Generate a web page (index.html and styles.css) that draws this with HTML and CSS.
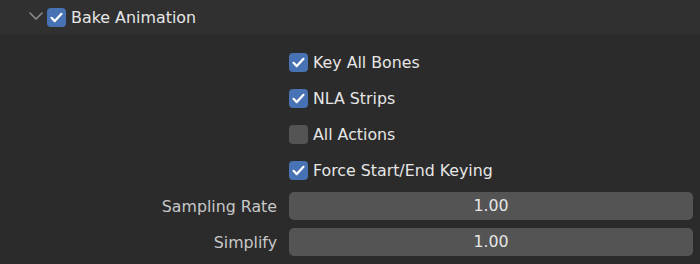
FILE: index.html
```html
<!DOCTYPE html>
<html lang="en">
<head>
    <meta charset="UTF-8">
    <title>Bake Animation</title>
    <link rel="stylesheet" href="styles.css">
</head>
<body>
    <div class="panel">
        <div class="panel-header">
            <svg class="chevron" width="14" height="8" viewBox="0 0 14 8">
                <path d="M1 1l6 6 6-6" fill="none" stroke="#8a8a8a" stroke-width="1.6" stroke-linecap="round" stroke-linejoin="round"/>
            </svg>
            <span class="check on">
                <svg width="19" height="19" viewBox="0 0 19 19"><path d="M4.5 9.8l3.3 3.3 6.7-7.3" fill="none" stroke="white" stroke-width="2.2" stroke-linecap="round" stroke-linejoin="round"/></svg>
            </span>
            <span class="header-title">Bake Animation</span>
        </div>
        <div class="panel-body">
            <div class="row">
                <div class="label"></div>
                <div class="control">
                    <span class="check on"><svg width="19" height="19" viewBox="0 0 19 19"><path d="M4.5 9.8l3.3 3.3 6.7-7.3" fill="none" stroke="white" stroke-width="2.2" stroke-linecap="round" stroke-linejoin="round"/></svg></span>
                    <span class="check-text">Key All Bones</span>
                </div>
            </div>
            <div class="row">
                <div class="label"></div>
                <div class="control">
                    <span class="check on"><svg width="19" height="19" viewBox="0 0 19 19"><path d="M4.5 9.8l3.3 3.3 6.7-7.3" fill="none" stroke="white" stroke-width="2.2" stroke-linecap="round" stroke-linejoin="round"/></svg></span>
                    <span class="check-text">NLA Strips</span>
                </div>
            </div>
            <div class="row">
                <div class="label"></div>
                <div class="control">
                    <span class="check"></span>
                    <span class="check-text">All Actions</span>
                </div>
            </div>
            <div class="row">
                <div class="label"></div>
                <div class="control">
                    <span class="check on"><svg width="19" height="19" viewBox="0 0 19 19"><path d="M4.5 9.8l3.3 3.3 6.7-7.3" fill="none" stroke="white" stroke-width="2.2" stroke-linecap="round" stroke-linejoin="round"/></svg></span>
                    <span class="check-text">Force Start/End Keying</span>
                </div>
            </div>
            <div class="row">
                <div class="label">Sampling Rate</div>
                <div class="control">
                    <div class="field">1.00</div>
                </div>
            </div>
            <div class="row">
                <div class="label">Simplify</div>
                <div class="control">
                    <div class="field">1.00</div>
                </div>
            </div>
        </div>
    </div>
</body>
</html>
```

FILE: styles.css
```css
body {
    margin: 0;
    background-color: #2b2b2b;
    font-family: 'DejaVu Sans', sans-serif;
    font-size: 15.8px;
    color: #e6e6e6;
}
.panel {
    width: 700px;
    height: 264px;
    overflow: hidden;
}
.panel-header {
    height: 35px;
    background-color: #303030;
    display: flex;
    align-items: center;
    padding-left: 29px;
    box-sizing: border-box;
}
.chevron {
    margin-right: 4px;
    margin-top: -3px;
}
.header-title {
    margin-left: 5px;
    font-size: 15.9px;
}
.panel-body {
    padding-top: 9px;
}
.row {
    height: 36px;
    display: flex;
    align-items: center;
}
.label {
    width: 277px;
    text-align: right;
    color: #c8c8c8;
}
.control {
    flex: 1;
    display: flex;
    align-items: center;
    margin-left: 12px;
    margin-right: 7px;
}
.check {
    width: 19px;
    height: 19px;
    border-radius: 4px;
    background-color: #545454;
    display: flex;
    flex-shrink: 0;
}
.check.on {
    background-color: #4772b3;
}
.check-text {
    margin-left: 5px;
}
.field {
    flex: 1;
    height: 28px;
    line-height: 28px;
    border-radius: 5px;
    background-color: #545454;
    text-align: center;
}
```
